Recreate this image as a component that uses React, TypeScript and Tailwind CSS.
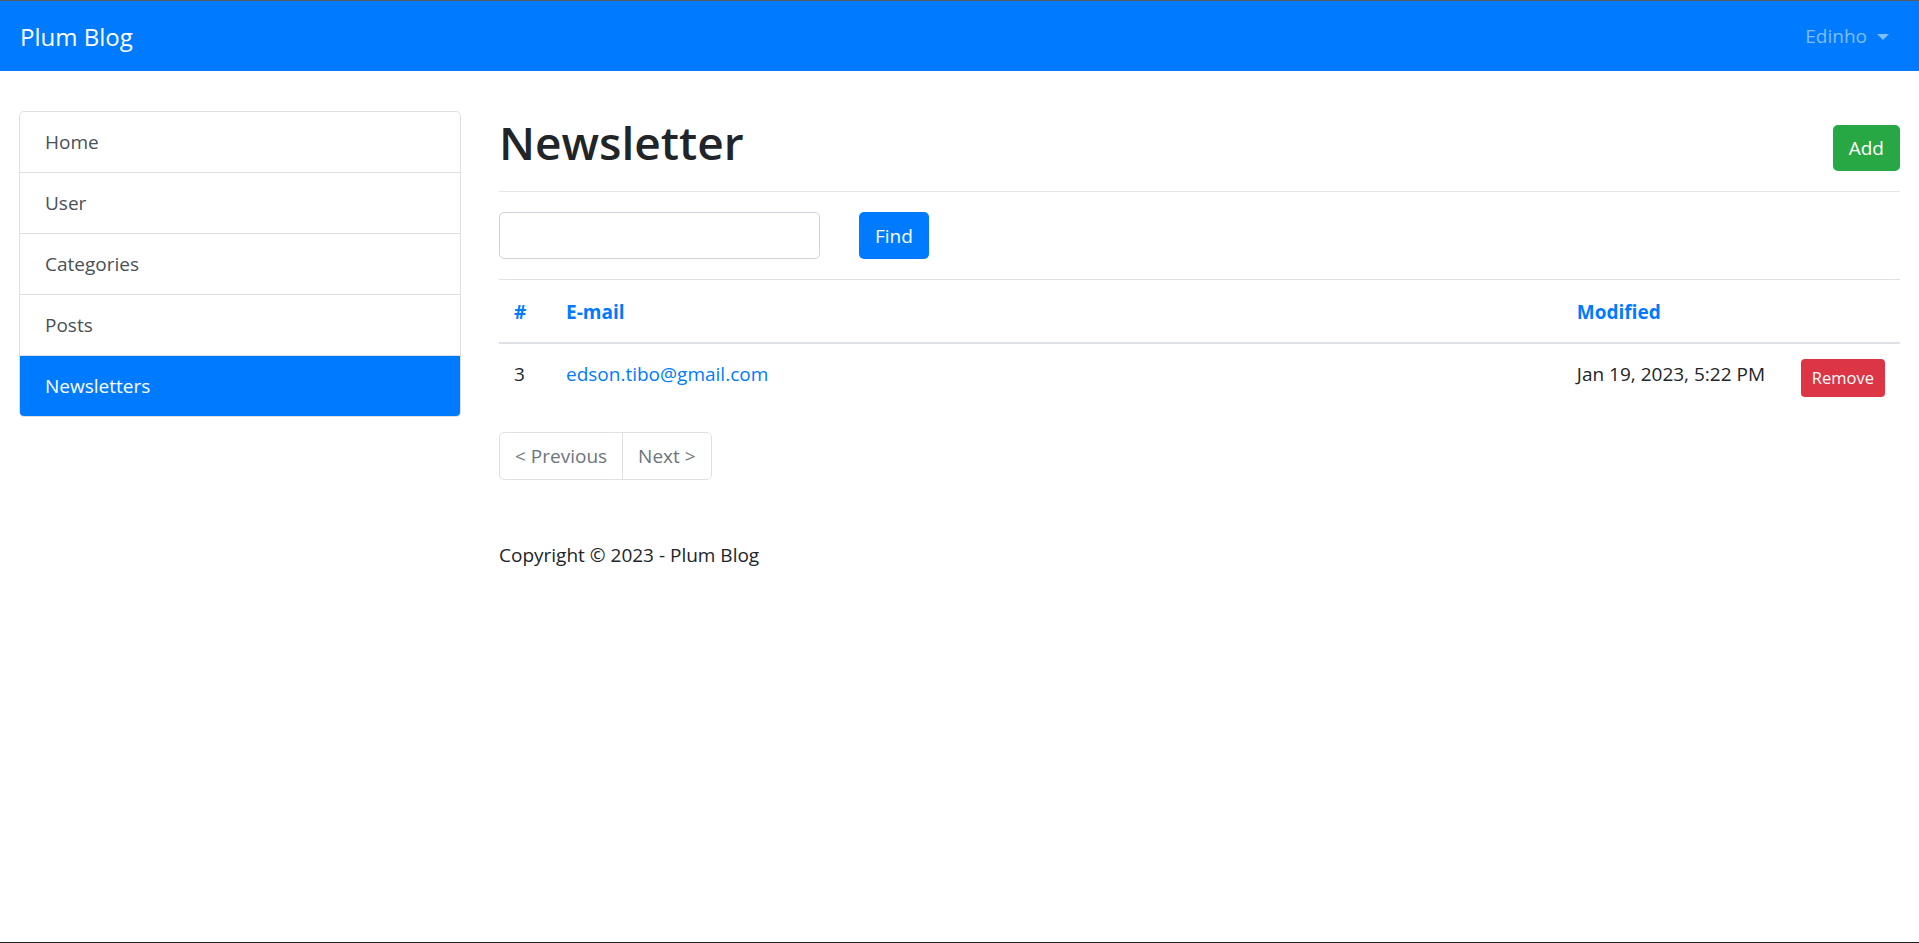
const NAV_LINKS = [
  { label: "Home", active: false },
  { label: "User", active: false },
  { label: "Categories", active: false },
  { label: "Posts", active: false },
  { label: "Newsletters", active: true },
];

// Bootstrap 4 admin screen, photographed at 125% zoom — every size below is
// the Bootstrap value x1.25.
export default function App() {
  return (
    <div className="flex h-[943px] flex-col overflow-hidden border-t border-b border-t-[#5a5a5a] border-b-[#1e1e1e] bg-white font-['Open_Sans',sans-serif] text-[19px] leading-[30px] text-[#212529]">
      <header className="flex h-[70px] shrink-0 items-center justify-between bg-[#007bff] px-5">
        <span className="text-[24px] leading-[37px] text-white">Plum Blog</span>
        <button className="flex items-center gap-[10px] px-[10px] text-[19px] text-[#80bdff]">
          Edinho
          <span className="mt-[2px] h-0 w-0 border-x-[6px] border-t-[6px] border-x-transparent border-t-[#80bdff]" />
        </button>
      </header>

      <div className="grid flex-1 grid-cols-[480px_1fr] pt-10">
        <aside className="px-[19px]">
          <ul className="flex flex-col overflow-hidden rounded-[5px] border border-[#dfdfdf]">
            {NAV_LINKS.map((link, i) => (
              <li
                key={link.label}
                className={
                  (i > 0 ? "border-t border-[#dfdfdf] " : "") +
                  (link.active
                    ? "bg-[#007bff] px-[25px] py-[15px] text-white"
                    : "px-[25px] py-[15px] text-[#495057]")
                }
              >
                {link.label}
              </li>
            ))}
          </ul>
        </aside>

        <main className="px-[19px]">
          <div className="mb-5 flex items-start justify-between border-b border-[#e6e6e6] pb-[10px]">
            <h1 className="mb-[10px] pt-[2px] text-[46px] leading-[58px] font-semibold text-[#212529]">Newsletter</h1>
            <button className="mt-[14px] rounded-[5px] bg-[#28a745] px-[16px] py-[8px] text-[19px] leading-[30px] text-white">
              Add
            </button>
          </div>

          <div className="mb-5 flex items-center gap-[39px]">
            <input className="h-[47px] w-[321px] rounded-[5px] border border-[#ced4da] px-3 outline-none" />
            <button className="h-[47px] rounded-[5px] bg-[#007bff] px-[16px] text-[19px] text-white">Find</button>
          </div>

          <table className="mb-5 w-full border-collapse text-left">
            <thead>
              <tr className="border-t border-b-[2.5px] border-t-[#dee2e6] border-b-[#dee2e6]">
                <th className="w-[52px] px-[15px] pt-[17px] pb-[15px] font-bold text-[#007bff]">#</th>
                <th className="px-[15px] pt-[17px] pb-[15px] font-bold text-[#007bff]">E-mail</th>
                <th className="w-[224px] px-[15px] pt-[17px] pb-[15px] font-bold text-[#007bff]">Modified</th>
                <th className="w-[114px] px-[15px] pt-[17px] pb-[15px]"></th>
              </tr>
            </thead>
            <tbody>
              <tr>
                <td className="px-[15px] py-[15px] align-top">3</td>
                <td className="px-[15px] py-[15px] align-top text-[#007bff]">edson.tibo@gmail.com</td>
                <td className="px-[15px] py-[15px] align-top">Jan 19, 2023, 5:22 PM</td>
                <td className="px-[15px] py-[15px] align-top">
                  <button className="rounded-[4px] bg-[#dc3545] px-[11px] py-[5px] text-[16.5px] leading-[28px] text-white">
                    Remove
                  </button>
                </td>
              </tr>
            </tbody>
          </table>

          <div className="flex w-fit rounded-[5px] border border-[#dee2e6] text-[#6c757d]">
            <span className="px-[15px] py-[8px] leading-[30px]">&lt; Previous</span>
            <span className="border-l border-[#dee2e6] px-[15px] py-[8px] leading-[30px]">Next &gt;</span>
          </div>

          <footer className="mt-[60px]">Copyright © 2023 - Plum Blog</footer>
        </main>
      </div>
    </div>
  );
}
